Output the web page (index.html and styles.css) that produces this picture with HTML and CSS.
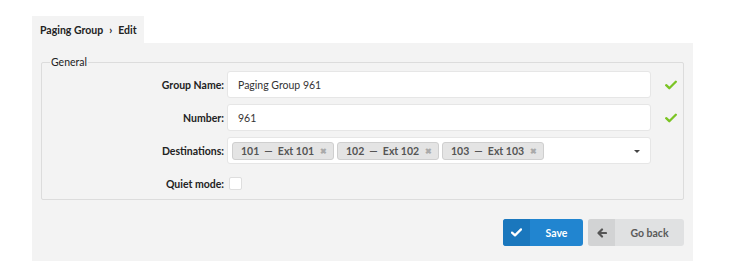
FILE: index.html
```html
<!DOCTYPE html>
<html>
<head>
<meta charset="utf-8">
<link rel="stylesheet" href="styles.css">
</head>
<body>
<div class="page">
  <div class="tab"><span>Paging Group</span><span class="sep">›</span><span>Edit</span></div>
  <div class="panel">
    <fieldset class="group">
      <legend>General</legend>
      <div class="form">
        <label class="lbl">Group Name:</label>
        <div class="input">Paging Group 961</div>
        <div class="ok"><svg width="12" height="10" viewBox="0 0 12 10"><path d="M1.2 5.2 L4.3 8.2 L10.8 1.8" fill="none" stroke="#7bc424" stroke-width="2.3" stroke-linecap="round" stroke-linejoin="round"/></svg></div>

        <label class="lbl">Number:</label>
        <div class="input">961</div>
        <div class="ok"><svg width="12" height="10" viewBox="0 0 12 10"><path d="M1.2 5.2 L4.3 8.2 L10.8 1.8" fill="none" stroke="#7bc424" stroke-width="2.3" stroke-linecap="round" stroke-linejoin="round"/></svg></div>

        <label class="lbl">Destinations:</label>
        <div class="input multi">
          <span class="tag">101 &nbsp;— &nbsp;Ext 101<span class="x">✖</span></span>
          <span class="tag">102 &nbsp;— &nbsp;Ext 102<span class="x">✖</span></span>
          <span class="tag">103 &nbsp;— &nbsp;Ext 103<span class="x">✖</span></span>
          <span class="caret"></span>
        </div>
        <div></div>

        <label class="lbl">Quiet mode:</label>
        <div class="checkrow"><span class="checkbox"></span></div>
        <div></div>
      </div>
    </fieldset>
    <div class="actions">
      <button class="btn save"><span class="ico"><svg width="11" height="9" viewBox="0 0 11 9"><path d="M1 4.6 L4 7.4 L10 1.4" fill="none" stroke="#fff" stroke-width="2.2" stroke-linecap="round" stroke-linejoin="round"/></svg></span><span class="txt">Save</span></button>
      <button class="btn back"><span class="ico"><svg width="10" height="10" viewBox="0 0 10 10"><path d="M9 5 H2 M5 1.5 L1.5 5 L5 8.5" fill="none" stroke="#555" stroke-width="2.2" stroke-linecap="round" stroke-linejoin="round"/></svg></span><span class="txt">Go back</span></button>
    </div>
  </div>
</div>
</body>
</html>
```

FILE: styles.css
```css
* { box-sizing: border-box; }
html, body { margin: 0; padding: 0; background: #fff; }
body { font-family: Lato, "Open Sans", sans-serif; font-size: 10.5px; color: #222; }
.page { padding: 16px 0 0 32px; width: 693px; }
.tab {
  display: inline-flex; align-items: center; height: 27px; padding: 0 7px 0 8px;
  background: #f3f3f3; font-weight: bold; color: #222; white-space: nowrap; font-size: 10.5px;
}
.tab .sep { margin: 0 6px 0 6px; font-weight: bold; }
.panel { background: #f3f3f3; width: 661px; padding: 13px 9px 15px 9px; }
.group {
  margin: 0; border: 1px solid #dcdcdc; border-radius: 2px; padding: 2px 0 2px 0;
  min-width: 0;
}
.group legend { padding: 0 1px; margin-left: 8px; font-size: 10.5px; line-height: 13px; color: #222; }
.form {
  display: grid; grid-template-columns: 182px 424px auto; column-gap: 3px; row-gap: 6px;
  align-items: center;
}
.lbl { text-align: right; font-weight: bold; color: #222; }
.input {
  height: 27px; background: #fff; border: 1px solid #e6e6e6; border-radius: 3px;
  display: flex; align-items: center; padding: 0 10px; color: #333; font-size: 10.5px;
}
.ok { padding-left: 11px; display: flex; align-items: center; }
.multi { padding: 0 4px; gap: 3px; position: relative; }
.tag {
  display: inline-flex; align-items: center; height: 18px; padding: 0 6px 0 8px;
  background: #e4e4e4; border: 1px solid #cfcfcf; border-radius: 3px; color: #555;
  font-weight: bold; font-size: 10.5px; width: 102px; white-space: nowrap;
}
.tag .x { color: #aaa; font-size: 8px; margin-left: auto; }
.caret {
  position: absolute; right: 10px; top: 12px; width: 0; height: 0;
  border-left: 3px solid transparent; border-right: 3px solid transparent; border-top: 3px solid #444;
}
.checkrow { height: 27px; display: flex; align-items: center; padding-left: 2px; }
.checkbox { width: 13px; height: 13px; background: #fff; border: 1px solid #dedede; border-radius: 2px; }
.actions { display: flex; justify-content: flex-end; gap: 5px; margin-top: 19px; }
.btn {
  display: flex; align-items: stretch; height: 27px; border: 0; border-radius: 3px; padding: 0;
  font-family: Lato, sans-serif; font-weight: bold; font-size: 10.5px; overflow: hidden; cursor: pointer;
}
.btn .ico { width: 27px; display: flex; align-items: center; justify-content: center; }
.btn .txt { flex: 1; display: flex; align-items: center; justify-content: center; }
.save { width: 80px; background: #2185d0; color: #fff; }
.save .ico { background: #1a77bd; }
.back { width: 96px; background: #e0e1e2; color: #5a5a5a; }
.back .ico { background: #d2d3d4; }
```
